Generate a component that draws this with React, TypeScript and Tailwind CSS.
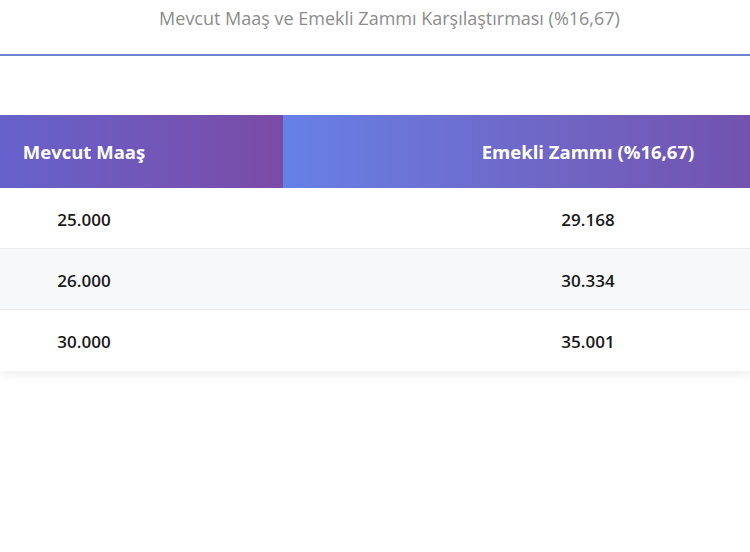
const rows = [
  ["25.000", "29.168"],
  ["26.000", "30.334"],
  ["30.000", "35.001"],
];

export default function App() {
  return (
    <main className="w-[750px] h-[552px] overflow-hidden bg-white" style={{ fontFamily: '"Open Sans", "Noto Sans", sans-serif' }}>
      <h2 className="pt-[5px] pl-[29px] text-center text-[18px] leading-[26px] font-normal text-[#8c8c8c]">
        Mevcut Maaş ve Emekli Zammı Karşılaştırması (%16,67)
      </h2>
      <div className="mt-[23px] h-[2px] bg-[#6f85d4]" />

      <div className="mt-[59px] shadow-[0_4px_10px_rgba(0,0,0,0.07)]">
        <div className="flex h-[73px] text-white font-bold text-[18.5px]">
          <div className="w-[283px] flex items-center bg-gradient-to-r from-[#6562cc] to-[#7a4ba6]">
            <div className="w-[168px] text-center">Mevcut Maaş</div>
          </div>
          <div className="flex-1 flex items-center overflow-hidden bg-gradient-to-r from-[#6680e6] to-[#7252ae]">
            <div className="w-[610px] shrink-0 text-center">Emekli Zammı (%16,67)</div>
          </div>
        </div>
        {rows.map(([a, b], i) => (
          <div
            key={a}
            className={`flex h-[61px] items-center pt-[3px] text-[17px] font-semibold text-[#1a1a1a] ${i === 1 ? "bg-[#f7f8fa]" : "bg-white"} ${i < 2 ? "border-b border-[#ececec]" : ""}`}
          >
            <div className="w-[283px]">
              <div className="w-[168px] text-center">{a}</div>
            </div>
            <div className="flex-1 overflow-hidden">
              <div className="w-[610px] shrink-0 text-center">{b}</div>
            </div>
          </div>
        ))}
      </div>
    </main>
  );
}
